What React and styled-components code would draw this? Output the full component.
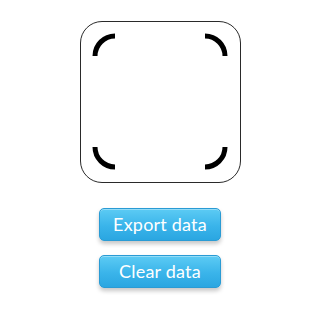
import styled, { createGlobalStyle } from "styled-components";

const GlobalStyle = createGlobalStyle`
  html, body {
    margin: 0;
    padding: 0;
    background: #ffffff;
  }
`;

const Page = styled.div`
  width: 320px;
  height: 320px;
  display: flex;
  flex-direction: column;
  align-items: center;
  padding-top: 21px;
  box-sizing: border-box;
  font-family: "Lato", "Open Sans", sans-serif;
`;

const Viewfinder = styled.div`
  width: 161px;
  height: 162px;
  box-sizing: border-box;
  border: 1px solid #2a2a2a;
  border-radius: 22px;
  margin-bottom: 25px;
  svg {
    display: block;
  }
`;

const Actions = styled.div`
  display: flex;
  flex-direction: column;
  gap: 14px;
  align-items: center;
`;

const Button = styled.button`
  width: 122px;
  height: 33px;
  border: 1px solid #2a9bd4;
  border-radius: 5px;
  background: linear-gradient(#5ccbf4, #3ab4ea 55%, #2aa6e1);
  color: #ffffff;
  font-family: "Lato", "Open Sans", sans-serif;
  font-size: 18px;
  letter-spacing: 0.2px;
  padding: 0 0 2px;
  box-shadow: 0 3px 4px rgba(0, 0, 0, 0.22), inset 0 1px 0 rgba(255, 255, 255, 0.35);
  cursor: pointer;
`;

const corners = [
  "M15 35 A20 20 0 0 1 35 15",
  "M125 15 A20 20 0 0 1 145 35",
  "M15 126 A20 20 0 0 0 35 146",
  "M145 126 A20 20 0 0 1 125 146",
];

const App = () => {
  return (
    <>
      <GlobalStyle />
      <Page>
        <Viewfinder>
          <svg width="159" height="160" viewBox="1 1 159 160">
            {corners.map((d, i) => (
              <path key={i} d={d} fill="none" stroke="#000" strokeWidth="5" />
            ))}
          </svg>
        </Viewfinder>
        <Actions>
          <Button>Export data</Button>
          <Button>Clear data</Button>
        </Actions>
      </Page>
    </>
  );
};

export default App;
